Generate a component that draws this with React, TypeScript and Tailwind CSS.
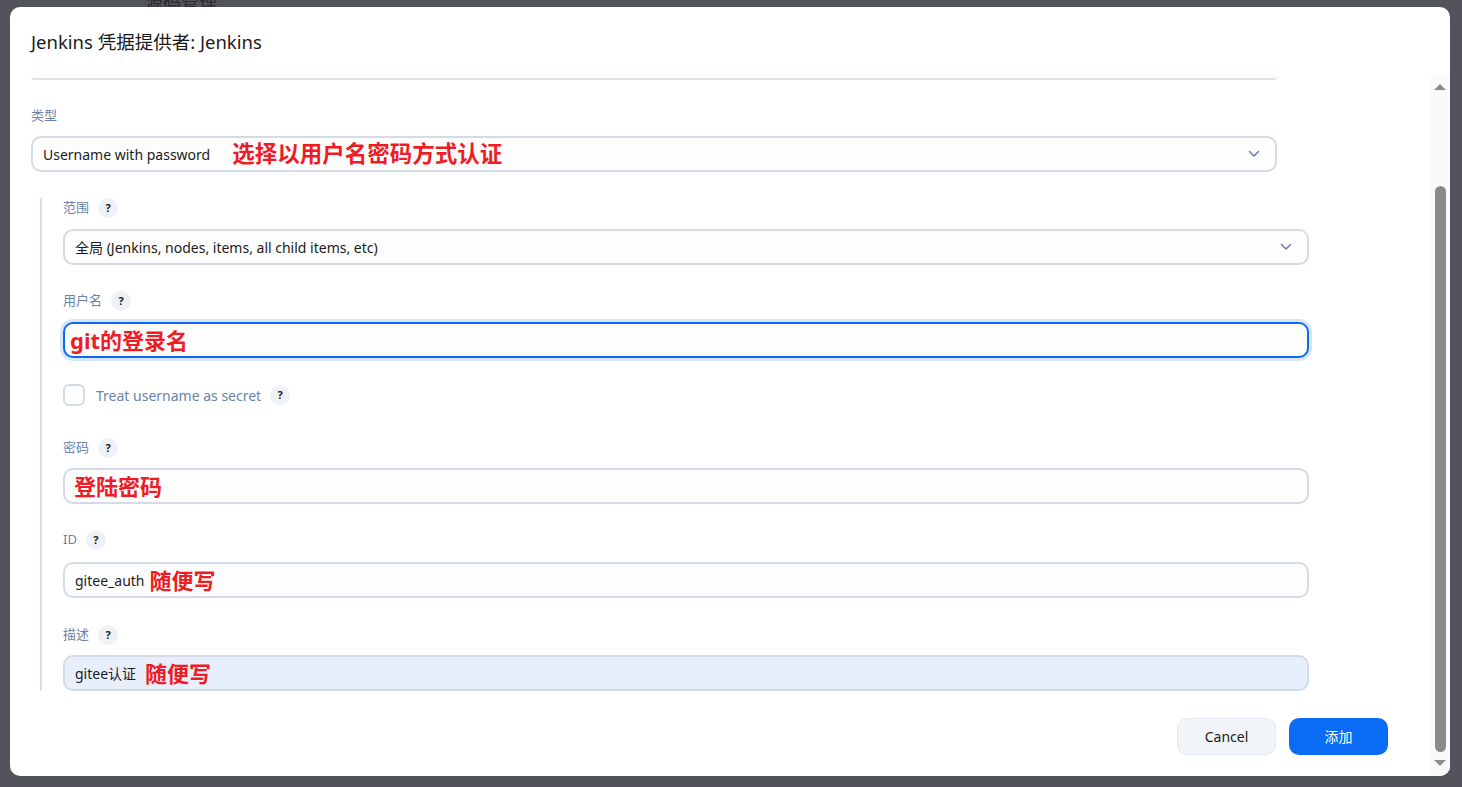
import React from 'react';

const font = { fontFamily: '"Noto Sans", "Noto Sans CJK SC", sans-serif' };

const Help: React.FC = () => (
  <span className="ml-[9px] inline-flex h-[20px] w-[20px] items-center justify-center rounded-full bg-[#eef1f6] text-[11px] font-bold text-[#1b1b1b]">
    ?
  </span>
);

const Label: React.FC<{ text: string; help?: boolean }> = ({ text, help = true }) => (
  <div className="flex h-[20px] items-center text-[13px] text-[#6a83aa]">
    <span>{text}</span>
    {help && <Help />}
  </div>
);

const Chevron: React.FC = () => (
  <svg width="12" height="8" viewBox="0 0 12 8" fill="none" className="shrink-0">
    <path d="M1.5 1.5 6 6l4.5-4.5" stroke="#6a82ad" strokeWidth="1.6" strokeLinecap="round" strokeLinejoin="round" />
  </svg>
);

const Select: React.FC<{ value: string; note?: string }> = ({ value, note }) => (
  <div className="flex h-[36px] w-[1246px] items-center rounded-[10px] border-2 border-[#d5dae7] bg-[#fdfdfd] pl-[10px] pr-[15px]">
    <span className="text-[14px] text-[#1b1b1b]">{value}</span>
    {note && <span className="ml-[22px] text-[22.5px] font-bold text-[#ee1c25]">{note}</span>}
    <span className="flex-1" />
    <Chevron />
  </div>
);

const Input: React.FC<{ value?: string; note: string; bg?: string; noteGap?: string }> = ({ value, note, bg = 'bg-[#fdfdfd]', noteGap = 'ml-[5px]' }) => (
  <div className={`flex h-[36px] w-[1246px] items-center rounded-[10px] border-2 border-[#d5dae7] pl-[10px] ${bg}`}>
    {value && <span className="text-[14px] text-[#1b1b1b]">{value}</span>}
    <span className={`${value ? noteGap : 'ml-[-1px]'} text-[22px] font-bold leading-none text-[#ee1c25]`}>{note}</span>
  </div>
);

const Scrollbar: React.FC = () => (
  <div className="flex w-[19px] flex-col items-center bg-[#fafafa] pr-[1px]">
    <div className="mt-[8px] h-0 w-0 border-x-[6px] border-b-[6px] border-x-transparent border-b-[#8c8c8c]" />
    <div className="mt-[96px] h-[566px] w-[11px] rounded-full bg-[#8a8a8a]" />
    <div className="mt-[8px] h-0 w-0 border-x-[6px] border-t-[6px] border-x-transparent border-t-[#8c8c8c]" />
  </div>
);

export default function App() {
  return (
    <div style={font} className="relative h-[787px] w-full overflow-hidden bg-[#53535c] px-[10px] pt-[7px]">
      <div className="absolute left-[145px] top-[-11px] text-[18px] text-[#2a2a30]">源码管理</div>
      <div className="relative flex h-[769px] w-[1440px] flex-col overflow-hidden rounded-[10px] bg-white">
        <div className="flex h-[69px] shrink-0 items-center pl-[21px] text-[18.5px] text-[#1a1a1a]">
          Jenkins 凭据提供者: Jenkins
        </div>
        <div className="flex min-h-0 flex-1">
          <div className="flex flex-1 flex-col pl-[21px]">
            <div className="h-[4px] w-[1246px] rounded-b-[6px] border-b-2 border-[#dde1ea]" />

            <div className="mt-[26px]">
              <Label text="类型" help={false} />
            </div>
            <div className="mt-[10px]">
              <Select value="Username with password" note="选择以用户名密码方式认证" />
            </div>

            <div className="ml-[9px] mt-[26px] flex flex-col border-l-2 border-[#d8dde9] pl-[21px]">
              <Label text="范围" />
              <div className="mt-[11px]">
                <Select value="全局 (Jenkins, nodes, items, all child items, etc)" />
              </div>

              <div className="mt-[26px]">
                <Label text="用户名" />
              </div>
              <div className="mt-[11px] flex h-[36px] w-[1246px] items-center rounded-[10px] border-2 border-[#0b6cf2] bg-[#fdfdfd] pl-[5px] shadow-[0_0_0_3px_#d7e5fb]">
                <span className="text-[22px] font-bold leading-none text-[#ee1c25]">git的登录名</span>
              </div>

              <div className="mt-[26px] flex h-[22px] items-center">
                <span className="h-[22px] w-[22px] rounded-[6px] border-2 border-[#d5dae7] bg-white" />
                <span className="ml-[11px] text-[14px] text-[#6a83aa]">Treat username as secret</span>
                <Help />
              </div>

              <div className="mt-[32px]">
                <Label text="密码" />
              </div>
              <div className="mt-[10px]">
                <Input note="登陆密码" />
              </div>

              <div className="mt-[26px]">
                <Label text="ID" />
              </div>
              <div className="mt-[12px]">
                <Input value="gitee_auth" note="随便写" />
              </div>

              <div className="mt-[27px]">
                <Label text="描述" />
              </div>
              <div className="mt-[10px]">
                <Input value="gitee认证" note="随便写" bg="bg-[#e8effc]" noteGap="ml-[9px]" />
              </div>
            </div>

            <div className="mt-[27px] flex w-[1357px] justify-end gap-[13px]">
              <button className="h-[37px] w-[99px] rounded-[10px] border border-[#e4e8ef] bg-[#f1f4f8] text-[14px] text-[#1b1b1b]">
                Cancel
              </button>
              <button className="h-[37px] w-[99px] rounded-[10px] bg-[#0a6cf5] text-[14px] text-white">添加</button>
            </div>
          </div>
          <Scrollbar />
        </div>
      </div>
    </div>
  );
}
